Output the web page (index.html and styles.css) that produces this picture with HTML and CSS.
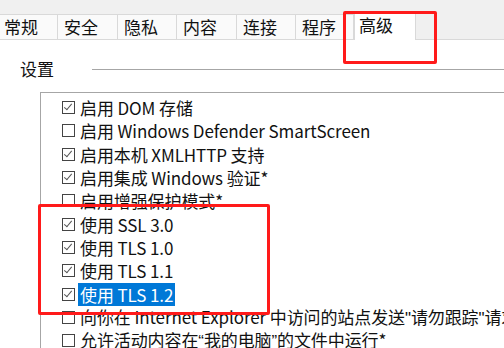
FILE: index.html
```html
<!DOCTYPE html>
<html lang="zh-CN">
<head>
<meta charset="utf-8">
<link rel="stylesheet" href="styles.css">
</head>
<body>
<div class="window">
  <div class="topstrip"></div>
  <div class="tabs">
    <div class="tab t1">常规</div>
    <div class="tab t2">安全</div>
    <div class="tab t3">隐私</div>
    <div class="tab t4">内容</div>
    <div class="tab t5">连接</div>
    <div class="tab t6">程序</div>
    <div class="tab active">高级</div>
  </div>
  <div class="content">
    <div class="group-title"><span class="gt-text">设置</span><span class="gt-line"></span></div>
    <div class="listbox">
      <div class="row"><span class="cb on"></span><span class="lbl">启用 DOM 存储</span></div>
      <div class="row"><span class="cb"></span><span class="lbl">启用 Windows Defender SmartScreen</span></div>
      <div class="row"><span class="cb on"></span><span class="lbl">启用本机 XMLHTTP 支持</span></div>
      <div class="row"><span class="cb on"></span><span class="lbl">启用集成 Windows 验证*</span></div>
      <div class="row"><span class="cb"></span><span class="lbl">启用增强保护模式*</span></div>
      <div class="row"><span class="cb on"></span><span class="lbl">使用 SSL 3.0</span></div>
      <div class="row"><span class="cb on"></span><span class="lbl">使用 TLS 1.0</span></div>
      <div class="row"><span class="cb on"></span><span class="lbl">使用 TLS 1.1</span></div>
      <div class="row"><span class="cb on"></span><span class="lbl sel">使用 TLS 1.2</span></div>
      <div class="row"><span class="cb"></span><span class="lbl">向你在 Internet Explorer 中访问的站点发送<span class="q">"</span>请勿跟踪<span class="q">"</span>请求</span></div>
      <div class="row"><span class="cb"></span><span class="lbl">允许活动内容在<span class="q">“</span>我的电脑<span class="q">”</span>的文件中运行*</span></div>
    </div>
  </div>
  <div class="mark mark-tab"></div>
  <div class="mark mark-tls"></div>
</div>
</body>
</html>
```
FILE: styles.css
```css
html, body {
  margin: 0;
  padding: 0;
  background: #ffffff;
}
.window {
  position: relative;
  width: 504px;
  height: 348px;
  overflow: hidden;
  font-family: "Noto Sans CJK SC", "Noto Sans", sans-serif;
  font-size: 17px;
  color: #111111;
  background: #ffffff;
}
.topstrip {
  height: 14px;
  background: #f0f0f0;
}
.tabs {
  display: flex;
  height: 25px;
  background: #f0f0f0;
  border-bottom: 1px solid #d9d9d9;
  position: relative;
}
.tab {
  box-sizing: border-box;
  height: 25px;
  line-height: 24px;
  padding-left: 4px;
  background: #fafafa;
  border-top: 1px solid #d9d9d9;
  border-right: 1px solid #d9d9d9;
}
.t1 { width: 58px; }
.t2 { width: 60px; padding-left: 6px; }
.t3 { width: 59px; padding-left: 6px; }
.t4 { width: 60px; padding-left: 6px; }
.t5 { width: 59px; padding-left: 6px; }
.t6 { width: 58px; padding-left: 6px; }
.tab.active {
  width: 62px;
  height: 28px;
  margin-top: -2px;
  padding-left: 4px;
  line-height: 24px;
  background: #ffffff;
  border-left: 1px solid #d9d9d9;
  border-right: 1px solid #d9d9d9;
  border-top: 1px solid #e3e3e3;
}
.content {
  padding-top: 17px;
}
.group-title {
  display: flex;
  align-items: center;
  height: 24px;
  padding-left: 20px;
}
.gt-text {
  line-height: 24px;
}
.gt-line {
  flex: 1;
  height: 1px;
  margin-left: 38px;
  background: #a6a6a6;
  margin-top: 1px;
}
.listbox {
  margin-left: 40px;
  margin-top: 11px;
  border-left: 1px solid #a6a6a6;
  border-top: 1px solid #a6a6a6;
  padding-top: 3px;
  white-space: nowrap;
}
.row {
  display: flex;
  align-items: center;
  height: 23.33px;
  padding-left: 21px;
}
.cb {
  box-sizing: border-box;
  flex: none;
  width: 13px;
  height: 13px;
  border: 1px solid #444444;
  background: #ffffff;
  position: relative;
  margin-right: 3px;
}
.cb.on::after {
  content: "";
  position: absolute;
  left: 3px;
  top: 0px;
  width: 3px;
  height: 7px;
  border-right: 1.2px solid #555555;
  border-bottom: 1.2px solid #555555;
  transform: rotate(40deg);
}
.lbl {
  line-height: 23px;
  padding: 0 2px;
  letter-spacing: -0.1px;
}
.q {
  font-family: "Liberation Sans", sans-serif;
}
.lbl.sel {
  background: #0078d7;
  color: #ffffff;
}
.mark {
  position: absolute;
  box-sizing: border-box;
  border: 3px solid #ff1a1a;
  border-radius: 2px;
}
.mark-tab {
  left: 343px;
  top: 11px;
  width: 94px;
  height: 53px;
}
.mark-tls {
  left: 38px;
  top: 204px;
  width: 232px;
  height: 111px;
}
```
